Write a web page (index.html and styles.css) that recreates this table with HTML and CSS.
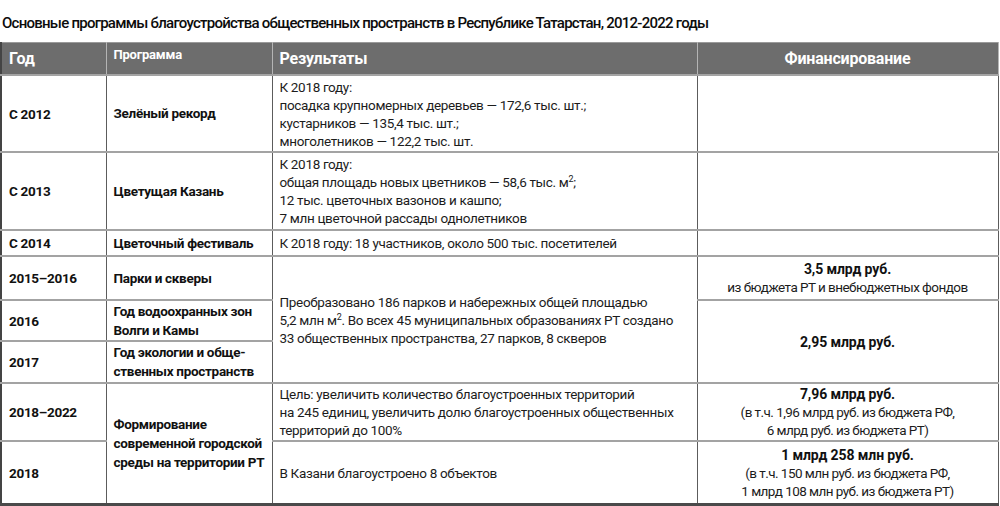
FILE: index.html
```html
<!DOCTYPE html>
<html lang="ru">
<head>
<meta charset="utf-8">
<link rel="stylesheet" href="styles.css">
</head>
<body>
<h1 class="title">Основные программы благоустройства общественных пространств в Республике Татарстан, 2012-2022 годы</h1>
<table class="grid">
  <colgroup>
    <col class="c-year"><col class="c-prog"><col class="c-res"><col class="c-fin">
  </colgroup>
  <thead>
    <tr class="head">
      <th class="h-year">Год</th>
      <th class="h-prog">Программа</th>
      <th class="h-res">Результаты</th>
      <th class="h-fin">Финансирование</th>
    </tr>
  </thead>
  <tbody>
    <tr class="r1">
      <td class="year">С 2012</td>
      <td class="prog">Зелёный рекорд</td>
      <td class="res">К 2018 году:<br>посадка крупномерных деревьев — 172,6 тыс. шт.;<br>кустарников — 135,4 тыс. шт.;<br>многолетников — 122,2 тыс. шт.</td>
      <td class="fin"></td>
    </tr>
    <tr class="r2">
      <td class="year">С 2013</td>
      <td class="prog">Цветущая Казань</td>
      <td class="res">К 2018 году:<br>общая площадь новых цветников — 58,6 тыс. м<sup>2</sup>;<br>12 тыс. цветочных вазонов и кашпо;<br>7 млн цветочной рассады однолетников</td>
      <td class="fin"></td>
    </tr>
    <tr class="r3">
      <td class="year">С 2014</td>
      <td class="prog">Цветочный фестиваль</td>
      <td class="res">К 2018 году: 18 участников, около 500 тыс. посетителей</td>
      <td class="fin"></td>
    </tr>
    <tr class="r4">
      <td class="year">2015–2016</td>
      <td class="prog">Парки и скверы</td>
      <td class="res" rowspan="3">Преобразовано 186 парков и набережных общей площадью<br>5,2 млн м<sup>2</sup>. Во всех 45 муниципальных образованиях РТ создано<br>33 общественных пространства, 27 парков, 8 скверов</td>
      <td class="fin"><b>3,5 млрд руб.</b><br>из бюджета РТ и внебюджетных фондов</td>
    </tr>
    <tr class="r5">
      <td class="year">2016</td>
      <td class="prog">Год водоохранных зон<br>Волги и Камы</td>
      <td class="fin" rowspan="2"><b>2,95 млрд руб.</b></td>
    </tr>
    <tr class="r6">
      <td class="year">2017</td>
      <td class="prog">Год экологии и обще-<br>ственных пространств</td>
    </tr>
    <tr class="r7">
      <td class="year">2018–2022</td>
      <td class="prog" rowspan="2">Формирование<br>современной городской<br>среды на территории РТ</td>
      <td class="res">Цель: увеличить количество благоустроенных территорий<br>на 245 единиц, увеличить долю благоустроенных общественных<br>территорий до 100%</td>
      <td class="fin"><b>7,96 млрд руб.</b><br>(в т.ч. 1,96 млрд руб. из бюджета РФ,<br>6 млрд руб. из бюджета РТ)</td>
    </tr>
    <tr class="r8">
      <td class="year">2018</td>
      <td class="res">В Казани благоустроено 8 объектов</td>
      <td class="fin"><b>1 млрд 258 млн руб.</b><br>(в т.ч. 150 млн руб. из бюджета РФ,<br>1 млрд 108 млн руб. из бюджета РТ)</td>
    </tr>
  </tbody>
</table>
</body>
</html>
```

FILE: styles.css
```css
html, body {
  margin: 0;
  padding: 0;
  background: #ffffff;
}
body {
  font-family: Roboto, "Liberation Sans", sans-serif;
  color: #111111;
  width: 1000px;
  height: 506px;
  overflow: hidden;
}
.title {
  margin: 0;
  padding: 13px 0 0 2px;
  height: 30px;
  box-sizing: border-box;
  font-size: 15px;
  font-weight: 500;
  line-height: 20px;
  letter-spacing: -0.75px;
  color: #0c0c0c;
  white-space: nowrap;
}
.grid {
  margin-top: 12px;
  width: 997px;
  border-collapse: collapse;
  table-layout: fixed;
  border-left: 2px solid #444;
  border-right: 1px solid #555;
  border-bottom: 3px solid #4a4a4a;
}
.c-year { width: 105px; }
.c-prog { width: 166px; }
.c-res { width: 425px; }
.c-fin { width: 301px; }

.head th {
  background: #6d6d6d;
  color: #ffffff;
  font-weight: bold;
  text-align: left;
  vertical-align: top;
  padding: 6px 0 0 7px;
  height: 25px;
  border-left: 1px solid #b5b5b5;
  border-right: 1px solid #b5b5b5;
  border-top: 1px solid #9a9a9a;
  font-size: 16px;
  line-height: 20px;
  letter-spacing: -0.2px;
}
.head .h-prog {
  font-size: 13px;
  line-height: 16px;
  padding-top: 4px;
}
.head .h-fin {
  text-align: center;
  padding-left: 0;
}
td {
  border-left: 1px solid #5c5c5c;
  border-right: 1px solid #5c5c5c;
  border-top: 2px solid #a3a3a3;
  border-bottom: 2px solid #a3a3a3;
  padding: 0 0 0 7px;
  vertical-align: middle;
  font-size: 13.5px;
  line-height: 18px;
  letter-spacing: -0.33px;
}
.year, .prog {
  font-weight: bold;
  font-size: 13.5px;
  line-height: 18px;
  letter-spacing: -0.3px;
}
.prog {
  line-height: 19px;
}
.res {
  color: #1c1c1c;
}
.fin {
  text-align: center;
  padding-left: 0;
  color: #1c1c1c;
  letter-spacing: -0.55px;
}
.fin b {
  font-size: 14px;
  letter-spacing: -0.1px;
  color: #111;
}
sup {
  font-size: 9px;
  line-height: 0;
  vertical-align: 5px;
}
.r1 td { height: 75px; }
.r2 td { height: 76px; }
.r3 td { height: 24px; }
.r4 td { height: 42px; }
.r5 td { height: 39px; }
.r6 td { height: 40px; }
.r7 td { height: 56px; }
.r8 td { height: 61px; }
```
